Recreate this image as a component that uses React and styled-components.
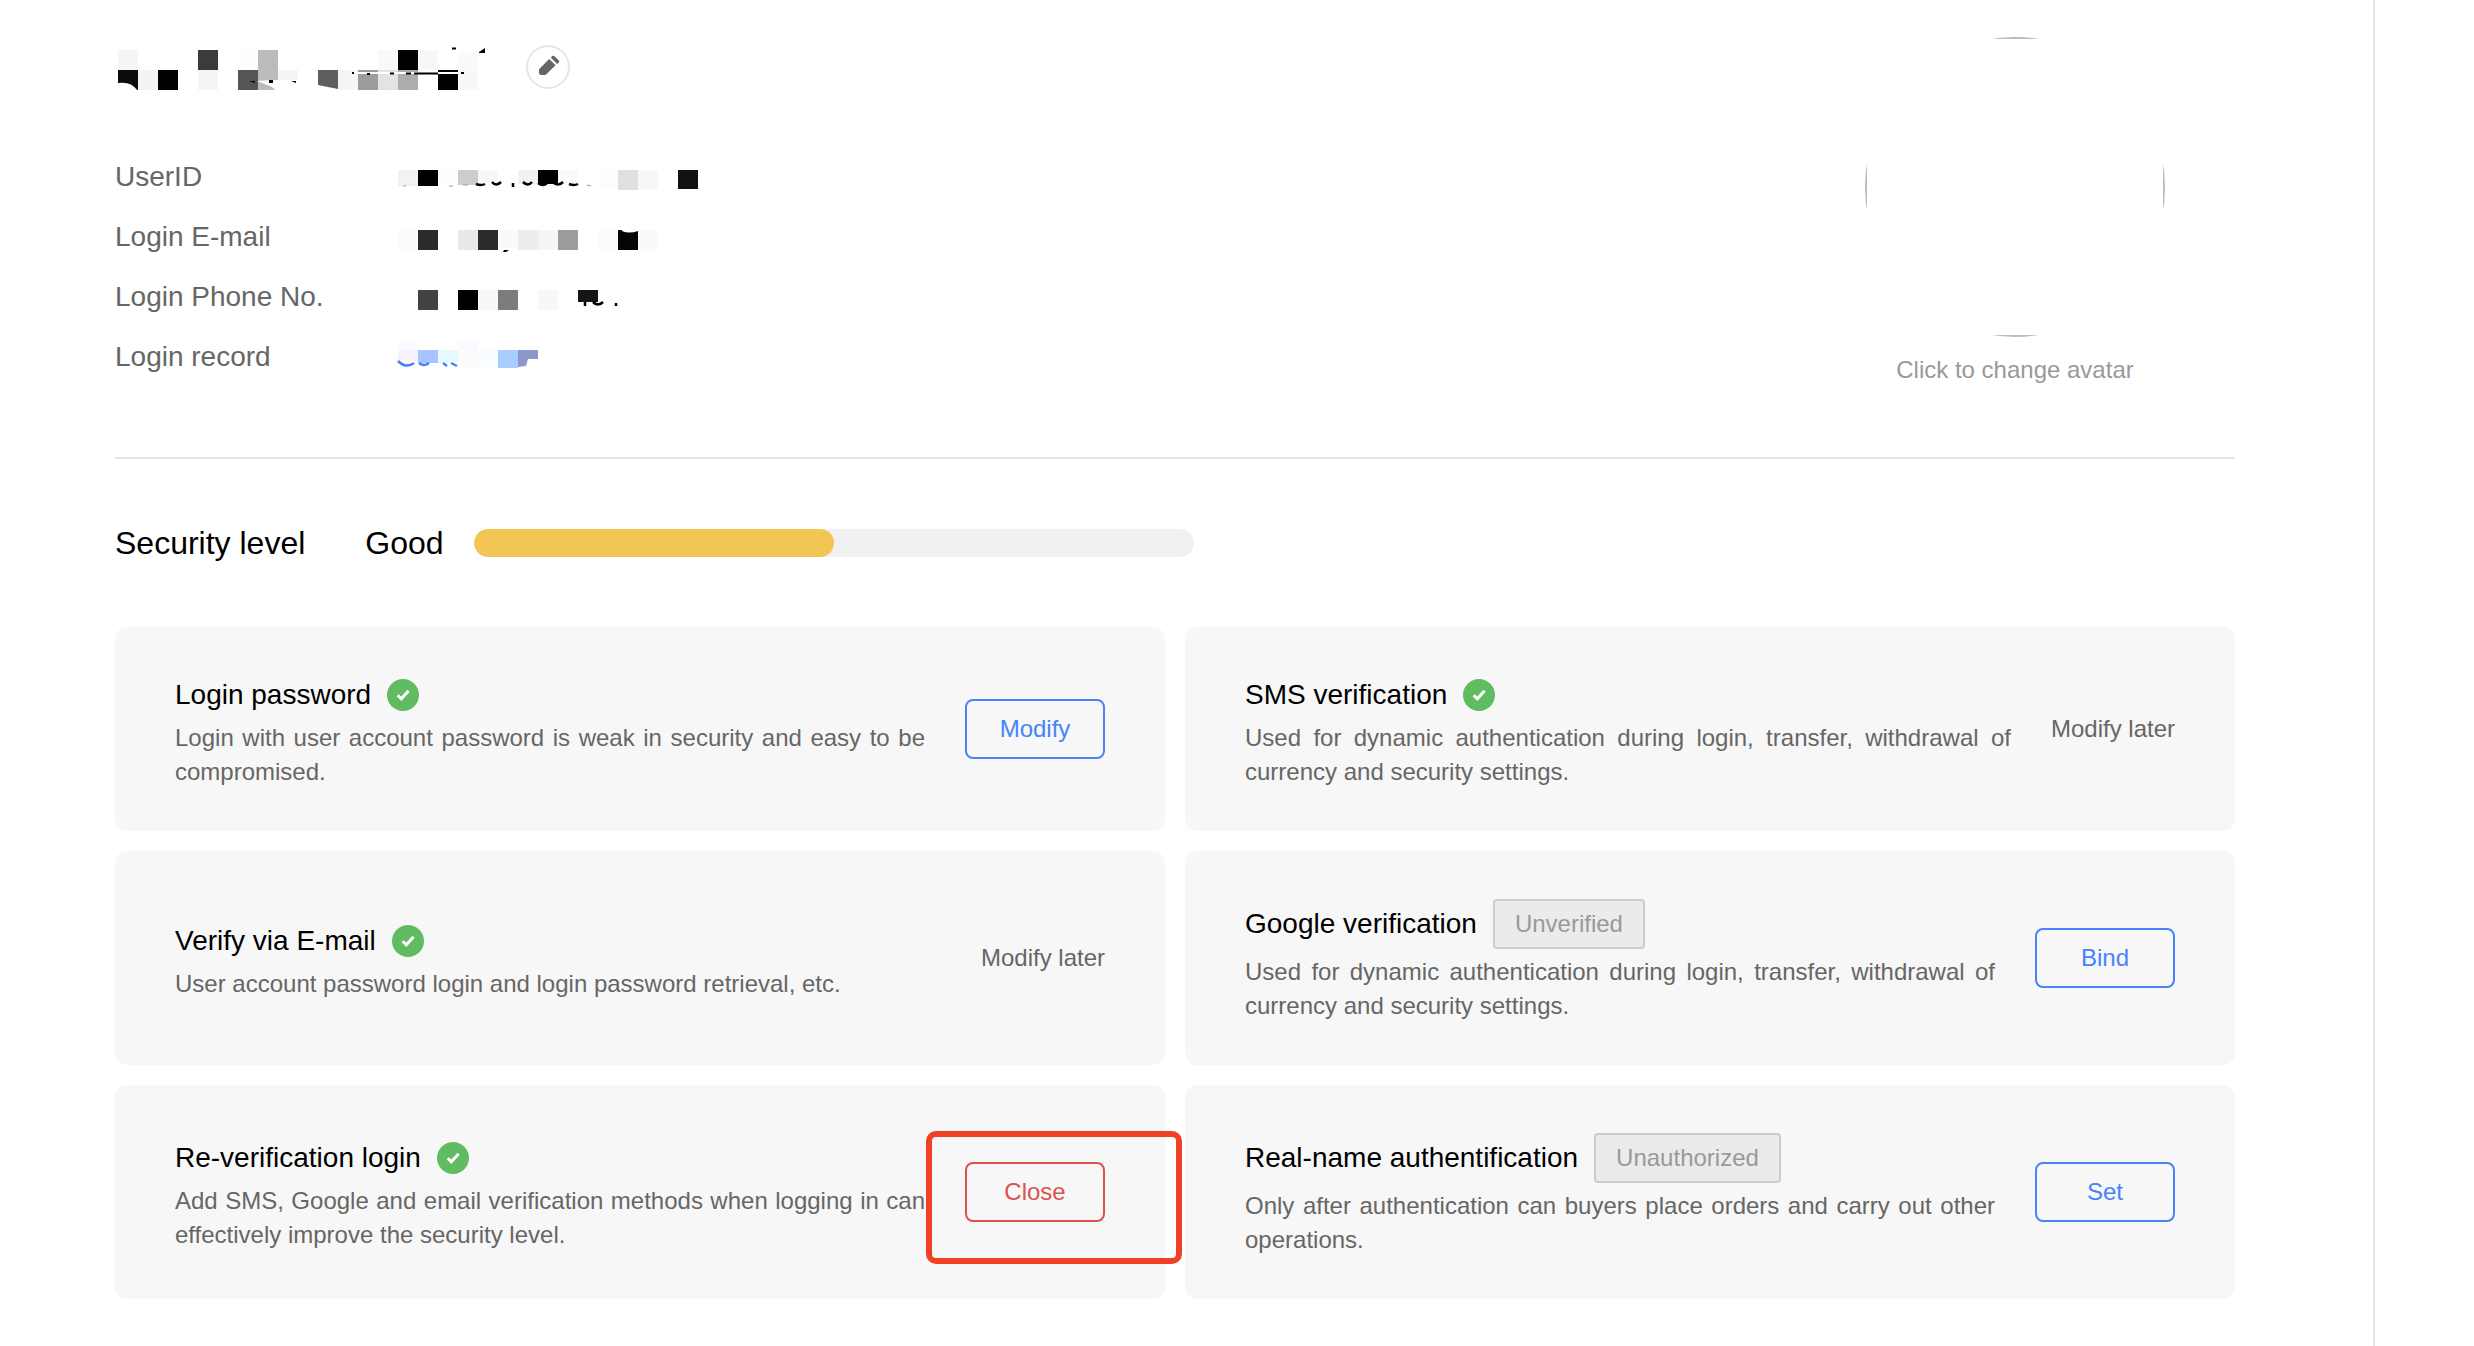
import React from "react";
import styled, { createGlobalStyle } from "styled-components";

const GlobalStyle = createGlobalStyle`
  * {
    box-sizing: border-box;
  }
  body {
    margin: 0;
    background: #ffffff;
    color: #000000;
    font-family: "Liberation Sans", Arial, sans-serif;
  }
  h1, h2, p, dl, dt, dd {
    margin: 0;
    font-weight: normal;
  }
  button {
    font-family: inherit;
    cursor: pointer;
  }
  svg {
    display: block;
  }
`;

const Page = styled.main`
  min-height: 100vh;
  margin-right: 99px;
  padding: 0 138px 47px 115px;
  border-right: 2px solid #e4e4e4;
`;
const Profile = styled.header`
  display: flex;
  justify-content: space-between;
  padding: 37px 70px 70px 0;
  border-bottom: 2px solid #e5e5e5;
`;
const NameRow = styled.div`
  display: flex;
  align-items: center;
  gap: 41px;
  height: 60px;
  margin-bottom: 50px;
`;
const EditButton = styled.button`
  width: 44px;
  height: 44px;
  padding: 0;
  border: 0;
  border-radius: 50%;
  background: #ffffff;
  box-shadow: inset 0 0 0 2px #e6e6e6;
`;
const InfoList = styled.dl`
  display: grid;
  grid-template-columns: 280px auto;
  grid-auto-rows: 60px;
  line-height: 60px;
  font-size: 28px;
  color: #666666;
`;
const AvatarButton = styled.button`
  display: flex;
  flex-direction: column;
  align-items: center;
  gap: 16px;
  padding: 0;
  border: 0;
  background: none;
  color: #999999;
  font-size: 24px;
  line-height: 34px;
`;
const AvatarCircle = styled.span`
  width: 300px;
  height: 300px;
  border-radius: 50%;
  overflow: hidden;
`;
const AvatarImage = styled.span`
  display: block;
  height: 100%;
  border: 2px solid #bbbbbb;
`;
const Level = styled.section`
  display: flex;
  align-items: center;
  height: 168px;
  font-size: 32px;
`;
const LevelTitle = styled.h2`
  margin-right: 60px;
  font-size: 32px;
`;
const Track = styled.div`
  width: 720px;
  height: 28px;
  margin-left: 30px;
  border-radius: 14px;
  background: #f1f1f1;
  overflow: hidden;
`;
const Fill = styled.div`
  height: 100%;
  border-radius: 14px;
  background: #f2c654;
`;
const Cards = styled.section`
  display: grid;
  grid-template-columns: 1fr 1fr;
  gap: 20px;
`;
const Card = styled.article`
  display: flex;
  align-items: center;
  justify-content: space-between;
  gap: 40px;
  padding: 42px 60px;
  border-radius: 12px;
  background: #f7f7f7;
`;
const CardText = styled.div`
  flex: 1;
`;
const CardHead = styled.div`
  display: flex;
  align-items: center;
  gap: 16px;
  min-height: 52px;
`;
const CardTitle = styled.h2`
  font-size: 28px;
`;
const Description = styled.p`
  color: #666666;
  font-size: 24px;
  line-height: 34px;
  text-align: justify;
`;
const Badge = styled.span`
  margin: 6px 0;
  padding: 0 20px;
  border: 2px solid #cccccc;
  border-radius: 4px;
  background: #ebebeb;
  color: #999999;
  font-size: 24px;
  line-height: 46px;
`;
const Action = styled.div`
  position: relative;
  flex: none;
`;
const ActionButton = styled.button`
  width: 140px;
  height: 60px;
  padding: 0;
  border: 2px solid ${props => (props.$danger ? "#d9534f" : "#4883f7")};
  border-radius: 8px;
  background: none;
  color: ${props => (props.$danger ? "#d9534f" : "#4883f7")};
  font-size: 24px;
`;
const Later = styled.span`
  color: #666666;
  font-size: 24px;
`;
// red frame drawn over the card edge
const Highlight = styled.div`
  position: absolute;
  top: -31px;
  right: -77px;
  bottom: -42px;
  left: -39px;
  border: 6px solid #ee4125;
  border-radius: 10px;
  pointer-events: none;
`;

const cards = [
  {
    title: "Login password",
    text:
      "Login with user account password is weak in security and easy to be compromised.",
    action: "Modify"
  },
  {
    title: "SMS verification",
    text:
      "Used for dynamic authentication during login, transfer, withdrawal of currency and security settings."
  },
  {
    title: "Verify via E-mail",
    text: "User account password login and login password retrieval, etc."
  },
  {
    title: "Google verification",
    badge: "Unverified",
    text:
      "Used for dynamic authentication during login, transfer, withdrawal of currency and security settings.",
    action: "Bind"
  },
  {
    title: "Re-verification login",
    text:
      "Add SMS, Google and email verification methods when logging in can effectively improve the security level.",
    action: "Close",
    danger: true
  },
  {
    title: "Real-name authentification",
    badge: "Unauthorized",
    text:
      "Only after authentication can buyers place orders and carry out other operations.",
    action: "Set"
  }
];

// mosaic cells: [column, top, height, colour], every column is 20px wide
const nameCells = [
  [0, 13, 20, "#f5f5f5"],
  [4, 13, 20, "#3b3b3b"],
  [6, 13, 20, "#fdfdfd"],
  [7, 13, 40, "#bbbbbb"],
  [13, 13, 20, "#f9f9f9"],
  [14, 13, 20, "#000000"],
  [15, 13, 20, "#f7f7f7"],
  [17, 15, 18, "#fafafa"],
  [0, 33, 20, "#0b0b0b"],
  [1, 33, 20, "#f3f3f3"],
  [2, 33, 20, "#000000"],
  [4, 33, 20, "#f5f5f5"],
  [6, 33, 20, "#555555"],
  [8, 33, 10, "#f5f5f5"],
  [10, 33, 20, "#5f5f5f"],
  [11, 33, 20, "#f5f5f5"],
  [12, 33, 20, "#9c9c9c"],
  [13, 33, 20, "#e3e3e3"],
  [14, 33, 20, "#acacac"],
  [16, 33, 20, "#000000"],
  [17, 33, 20, "#f8f8f8"]
];
const idCells = [
  [0, 23, 16, "#f2f2f2"],
  [1, 23, 16, "#000000"],
  [2, 23, 15, "#fdfdfd"],
  [3, 23, 15, "#cccccc"],
  [4, 23, 13, "#f7f7f7"],
  [6, 23, 14, "#f2f2f2"],
  [7, 23, 14, "#000000"],
  [8, 23, 14, "#fafafa"],
  [10, 23, 18, "#fdfdfd"],
  [11, 23, 20, "#e0e0e0"],
  [12, 23, 20, "#f7f7f7"],
  [14, 23, 19, "#111111"]
];
const mailCells = [
  [0, 23, 20, "#fcfcfc"],
  [1, 23, 20, "#2b2b2b"],
  [3, 23, 20, "#e8e8e8"],
  [4, 23, 20, "#2b2b2b"],
  [5, 23, 18, "#fafafa"],
  [6, 23, 20, "#ededed"],
  [7, 23, 20, "#f5f5f5"],
  [8, 23, 20, "#9c9c9c"],
  [10, 23, 20, "#fcfcfc"],
  [11, 23, 20, "#050505"],
  [12, 23, 19, "#fafafa"]
];
const phoneCells = [
  [1, 23, 20, "#434343"],
  [3, 23, 20, "#000000"],
  [4, 23, 20, "#f8f8f8"],
  [5, 23, 20, "#7c7c7c"],
  [7, 23, 20, "#f8f8f8"],
  [9, 23, 12, "#151515"]
];
const recordCells = [
  [0, 14, 9, "#fdfaff"],
  [3, 14, 9, "#fdf8ff"],
  [0, 23, 11, "#f6f1ff"],
  [1, 23, 13, "#a8c3ff"],
  [2, 23, 13, "#e6f9ff"],
  [3, 23, 17, "#fdfbfa"],
  [4, 23, 17, "#f8feff"],
  [5, 23, 18, "#a8ceff"],
  [6, 23, 9, "#8a98cb"]
];

const Mosaic = ({ width, cells, children }) => (
  <svg width={width} height="60" aria-hidden="true">
    {cells.map(([col, top, height, fill]) => (
      <rect
        key={col + "-" + top}
        x={3 + col * 20}
        y={top}
        width="20"
        height={height}
        fill={fill}
      />
    ))}
    {children}
  </svg>
);

const Pencil = () => (
  <svg width="44" height="44" viewBox="0 0 44 44" fill="#666666">
    <path d="M13 24.2 L23.2 14 L29.6 20.2 L19.5 30 H14.6 L13 28.4 Z" />
    <path d="M24.8 12.6 L26.3 11.1 Q27.3 10.2 28.3 11.1 L32.8 15.6 Q33.7 16.6 32.8 17.6 L31.2 19 Z" />
  </svg>
);

const Check = () => (
  <svg width="32" height="32" viewBox="0 0 32 32">
    <circle cx="16" cy="16" r="16" fill="#61bb60" />
    <path
      d="M10.7 16.2 L14.3 19.8 L21.6 11.8"
      fill="none"
      stroke="#ffffff"
      strokeWidth="3"
    />
  </svg>
);

const App = () => (
  <>
    <GlobalStyle />
    <Page>
      <Profile>
        <div>
          <NameRow>
            <Mosaic width={370} cells={nameCells}>
              <path d="M3 46 Q16 44 22 53 H3 Z" fill="#ffffff" />
              <path d="M142 44 L158 43 L183 43 V53 H160 Q156 49 142 44 Z" fill="#ffffff" />
              <path d="M143 47 Q156 47 160 53 H143 Z" fill="#bbbbbb" />
              <path d="M134 44 h6 v2 Z M154 43 h4 v3 h-4 Z M176 44 h5 v2 Z" />
              <path d="M203 48 L223 52 V54 H203 Z" fill="#ffffff" />
              <path d="M239 36 H344" stroke="#ffffff" strokeWidth="2" />
              <path
                d="M237 36 h2 M252 37 h3 M275 36.500 h4 M291 36.500 h5 M299 36.500 h24 M346 36 h3 M337 11.500 h4"
                stroke="#000000"
                strokeWidth="2"
              />
              <path d="M364 15 L370 11 V16 H364 Z" />
            </Mosaic>
            <EditButton aria-label="Edit name">
              <Pencil />
            </EditButton>
          </NameRow>
          <InfoList>
            <dt>UserID</dt>
            <dd>
              <Mosaic width={310} cells={idCells}>
                <g fill="none" stroke="#000000" strokeWidth="2.500">
                  <path d="M81 37 q5 2 9 0 M97 35 q4 5 9 0 M118 36 v4 M128 35 q5 5 9 0 M158 35 q5 5 10 0 M174 37 q5 2 9 0" />
                  <path d="M143 36 q5 4 9 0" />
                </g>
                <path
                  d="M8 39 h3 M54 39 h4 M68 38 h5 M192 38 l4 1"
                  stroke="#999999"
                />
              </Mosaic>
            </dd>
            <dt>Login E-mail</dt>
            <dd>
              <Mosaic width={310} cells={mailCells}>
                <path d="M109 43 h5 l-3 2 h-3 Z" />
                <path d="M227 22 V24 Q234 27 243 24 V22 Z" fill="#ffffff" />
              </Mosaic>
            </dd>
            <dt>Login Phone No.</dt>
            <dd>
              <Mosaic width={310} cells={phoneCells}>
                <path
                  d="M190 35 v4 M198 35 q5 5 10 0 M221 36 v3"
                  fill="none"
                  stroke="#000000"
                  strokeWidth="2.500"
                />
              </Mosaic>
            </dd>
            <dt>Login record</dt>
            <dd>
              <a href="#record" aria-label="Login record">
                <Mosaic width={310} cells={recordCells}>
                  <path
                    d="M3 34 Q11 42 19 36 M24 36 Q29 40 34 36 M48 36 l4 3 M56 36 l6 3"
                    fill="none"
                    stroke="#4883f7"
                    strokeWidth="2.500"
                  />
                  <path d="M123 32 H133 L131 39 L123 40 Z" fill="#8a98cb" />
                </Mosaic>
              </a>
            </dd>
          </InfoList>
        </div>
        <AvatarButton>
          <AvatarCircle>
            <AvatarImage />
          </AvatarCircle>
          Click to change avatar
        </AvatarButton>
      </Profile>
      <Level>
        <LevelTitle>Security level</LevelTitle>
        <span>Good</span>
        <Track
          role="progressbar"
          aria-label="Security level"
          aria-valuenow={50}
          aria-valuemin={0}
          aria-valuemax={100}
        >
          <Fill style={{ width: "50%" }} />
        </Track>
      </Level>
      <Cards>
        {cards.map(card => (
          <Card key={card.title}>
            <CardText>
              <CardHead>
                <CardTitle>{card.title}</CardTitle>
                {card.badge ? <Badge>{card.badge}</Badge> : <Check />}
              </CardHead>
              <Description>{card.text}</Description>
            </CardText>
            <Action>
              {card.action ? (
                <ActionButton $danger={card.danger}>{card.action}</ActionButton>
              ) : (
                <Later>Modify later</Later>
              )}
              {card.danger && <Highlight />}
            </Action>
          </Card>
        ))}
      </Cards>
    </Page>
  </>
);

export default App;
